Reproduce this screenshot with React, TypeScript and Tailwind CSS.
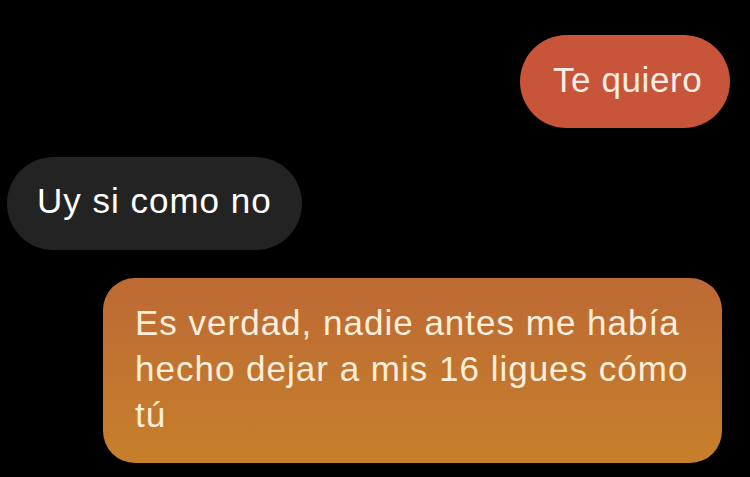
import React from "react";

export default function App() {
  return (
    <div
      className="w-[750px] h-[477px] bg-black overflow-hidden flex flex-col"
      style={{ fontFamily: '"Liberation Sans", Arial, sans-serif' }}
    >
      <div className="flex justify-end pt-[35px] pr-[20px]">
        <div className="h-[93px] w-[210px] rounded-full bg-[#c8543a] text-[#fbeee6] text-[35px] tracking-[0.6px] flex items-center pl-[33px] pb-[2px]">
          Te quiero
        </div>
      </div>
      <div className="flex justify-start pt-[29px] pl-[7px]">
        <div className="h-[93px] w-[295px] rounded-full bg-[#232323] text-white text-[35px] tracking-[1px] flex items-center pl-[30px] pb-[4px]">
          Uy si como no
        </div>
      </div>
      <div className="flex justify-end pt-[28px] pr-[28px]">
        <div className="w-[619px] rounded-[32px] bg-gradient-to-b from-[#bd6934] to-[#c6802a] text-[#fbeedb] text-[35px] tracking-[1px] leading-[46px] pl-[32px] pr-[10px] pt-[22px] pb-[25px]">
          Es verdad, nadie antes me había
          <br />
          hecho dejar a mis 16 ligues cómo
          <br />
          tú
        </div>
      </div>
    </div>
  );
}
